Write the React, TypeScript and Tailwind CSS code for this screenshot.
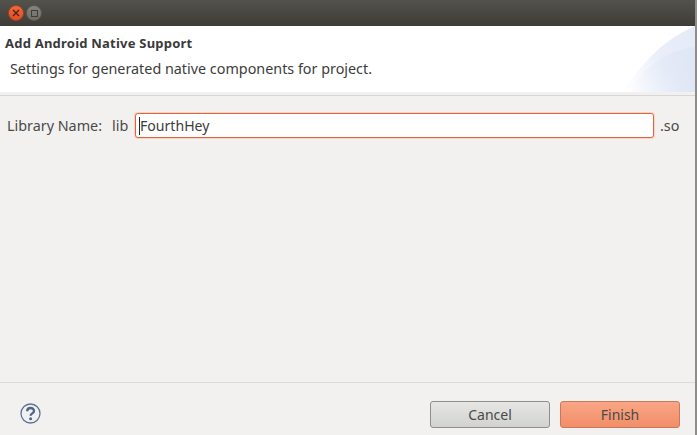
import React from 'react';

const font = { fontFamily: '"Noto Sans", sans-serif' };

const HeaderArt = () => (
  <svg className="absolute right-0 top-0" width="75" height="66" viewBox="0 0 75 66">
    <defs>
      <linearGradient id="fadeA" x1="0" y1="1" x2="1" y2="0.3">
        <stop offset="0" stopColor="#f4f6fc" stopOpacity="0" />
        <stop offset="0.6" stopColor="#e9eef9" />
        <stop offset="1" stopColor="#e6ebf8" />
      </linearGradient>
      <linearGradient id="fadeB" x1="0" y1="0.6" x2="1" y2="0.5">
        <stop offset="0" stopColor="#e2e8f6" stopOpacity="0" />
        <stop offset="1" stopColor="#dfe6f5" />
      </linearGradient>
    </defs>
    <path d="M2 66 C18 44 38 16 75 0 L75 66 Z" fill="url(#fadeA)" />
    <path d="M8 66 C24 40 48 24 75 21 L75 66 Z" fill="url(#fadeB)" />
  </svg>
);

const HelpIcon = () => (
  <svg width="21" height="21" viewBox="0 0 21 21">
    <circle cx="10.5" cy="10.5" r="9.5" fill="#f1f1f2" stroke="#5f7395" strokeWidth="1.3" />
    <path
      d="M7.2 8.2 C7.2 3.9 14 4 14 8 C14 10.4 10.6 10.4 10.6 12.8"
      fill="none"
      stroke="#4f6488"
      strokeWidth="2.3"
    />
    <circle cx="10.6" cy="15.7" r="1.5" fill="#4f6488" />
  </svg>
);

export default function App() {
  return (
    <div className="w-[697px] h-[435px] overflow-hidden flex bg-[#f2f1ef] text-[#3c3c3c]" style={font}>
      <div className="w-[695px] flex flex-col">
        {/* title bar */}
        <div className="h-[26px] flex items-center gap-[2px] pl-[8px] bg-gradient-to-b from-[#54524c] to-[#3d3c37]">
          <div className="w-[16px] h-[16px] rounded-full bg-gradient-to-b from-[#f0693a] to-[#dc5023] border border-[#a8401f] flex items-center justify-center">
            <svg width="8" height="8" viewBox="0 0 8 8">
              <path d="M1 1 L7 7 M7 1 L1 7" stroke="#4a2012" strokeWidth="1.3" />
            </svg>
          </div>
          <div className="w-[16px] h-[16px] rounded-full bg-gradient-to-b from-[#85847e] to-[#6f6e68] border border-[#5a5953] flex items-center justify-center">
            <div className="w-[7px] h-[7px] border border-[#3d3c37]" />
          </div>
        </div>

        {/* banner */}
        <div className="relative h-[66px] bg-white">
          <HeaderArt />
          <div className="pl-[5px] pt-[8px] text-[13px] leading-[18px] font-bold tracking-[0.22px] text-[#3a3a3a]">
            Add Android Native Support
          </div>
          <div className="pl-[10px] pt-[8px] text-[14.35px] leading-[18px] text-[#3c3c3c]">
            Settings for generated native components for project.
          </div>
        </div>
        <div className="h-[3px]" />
        <div className="h-[1px] bg-[#d8d7d5]" />

        {/* form */}
        <div className="flex-1 flex items-start pt-[17px] text-[14.35px] text-[#4a4a48]">
          <span className="ml-[7px] w-[105px] leading-[25px]">Library Name:</span>
          <span className="w-[23px] leading-[25px]">lib</span>
          <div className="w-[519px] h-[25px] rounded-[3px] border border-[#e4643c] shadow-[0_0_0_1px_rgba(240,150,110,0.3)] bg-white flex items-center pl-[3px] text-[14.1px] text-[#3c3c3c]">
            <span className="border-l-[1.5px] border-[#1c2a3a] leading-[18px]">FourthHey</span>
          </div>
          <span className="ml-[6px] leading-[25px]">.so</span>
        </div>

        <div className="h-[1px] bg-[#dcdbd8]" />

        {/* footer */}
        <div className="h-[52px] flex items-start pt-[18px] bg-[#f2f1ef]">
          <div className="ml-[20px] mt-[2px]">
            <HelpIcon />
          </div>
          <div className="ml-auto mr-[15px] flex gap-[10px] text-[14px]">
            <button className="w-[120px] h-[27px] rounded-[3px] border border-[#8f8e8a] bg-gradient-to-b from-[#e6e6e5] to-[#d2d2d0] text-[#4a4a48]">
              Cancel
            </button>
            <button className="w-[120px] h-[27px] rounded-[3px] border border-[#c9785a] bg-gradient-to-b from-[#f9a585] to-[#f18e68] text-[#4a4a48]">
              Finish
            </button>
          </div>
        </div>
      </div>
      <div className="w-[2px] bg-[#8e8d8a]" />
    </div>
  );
}
